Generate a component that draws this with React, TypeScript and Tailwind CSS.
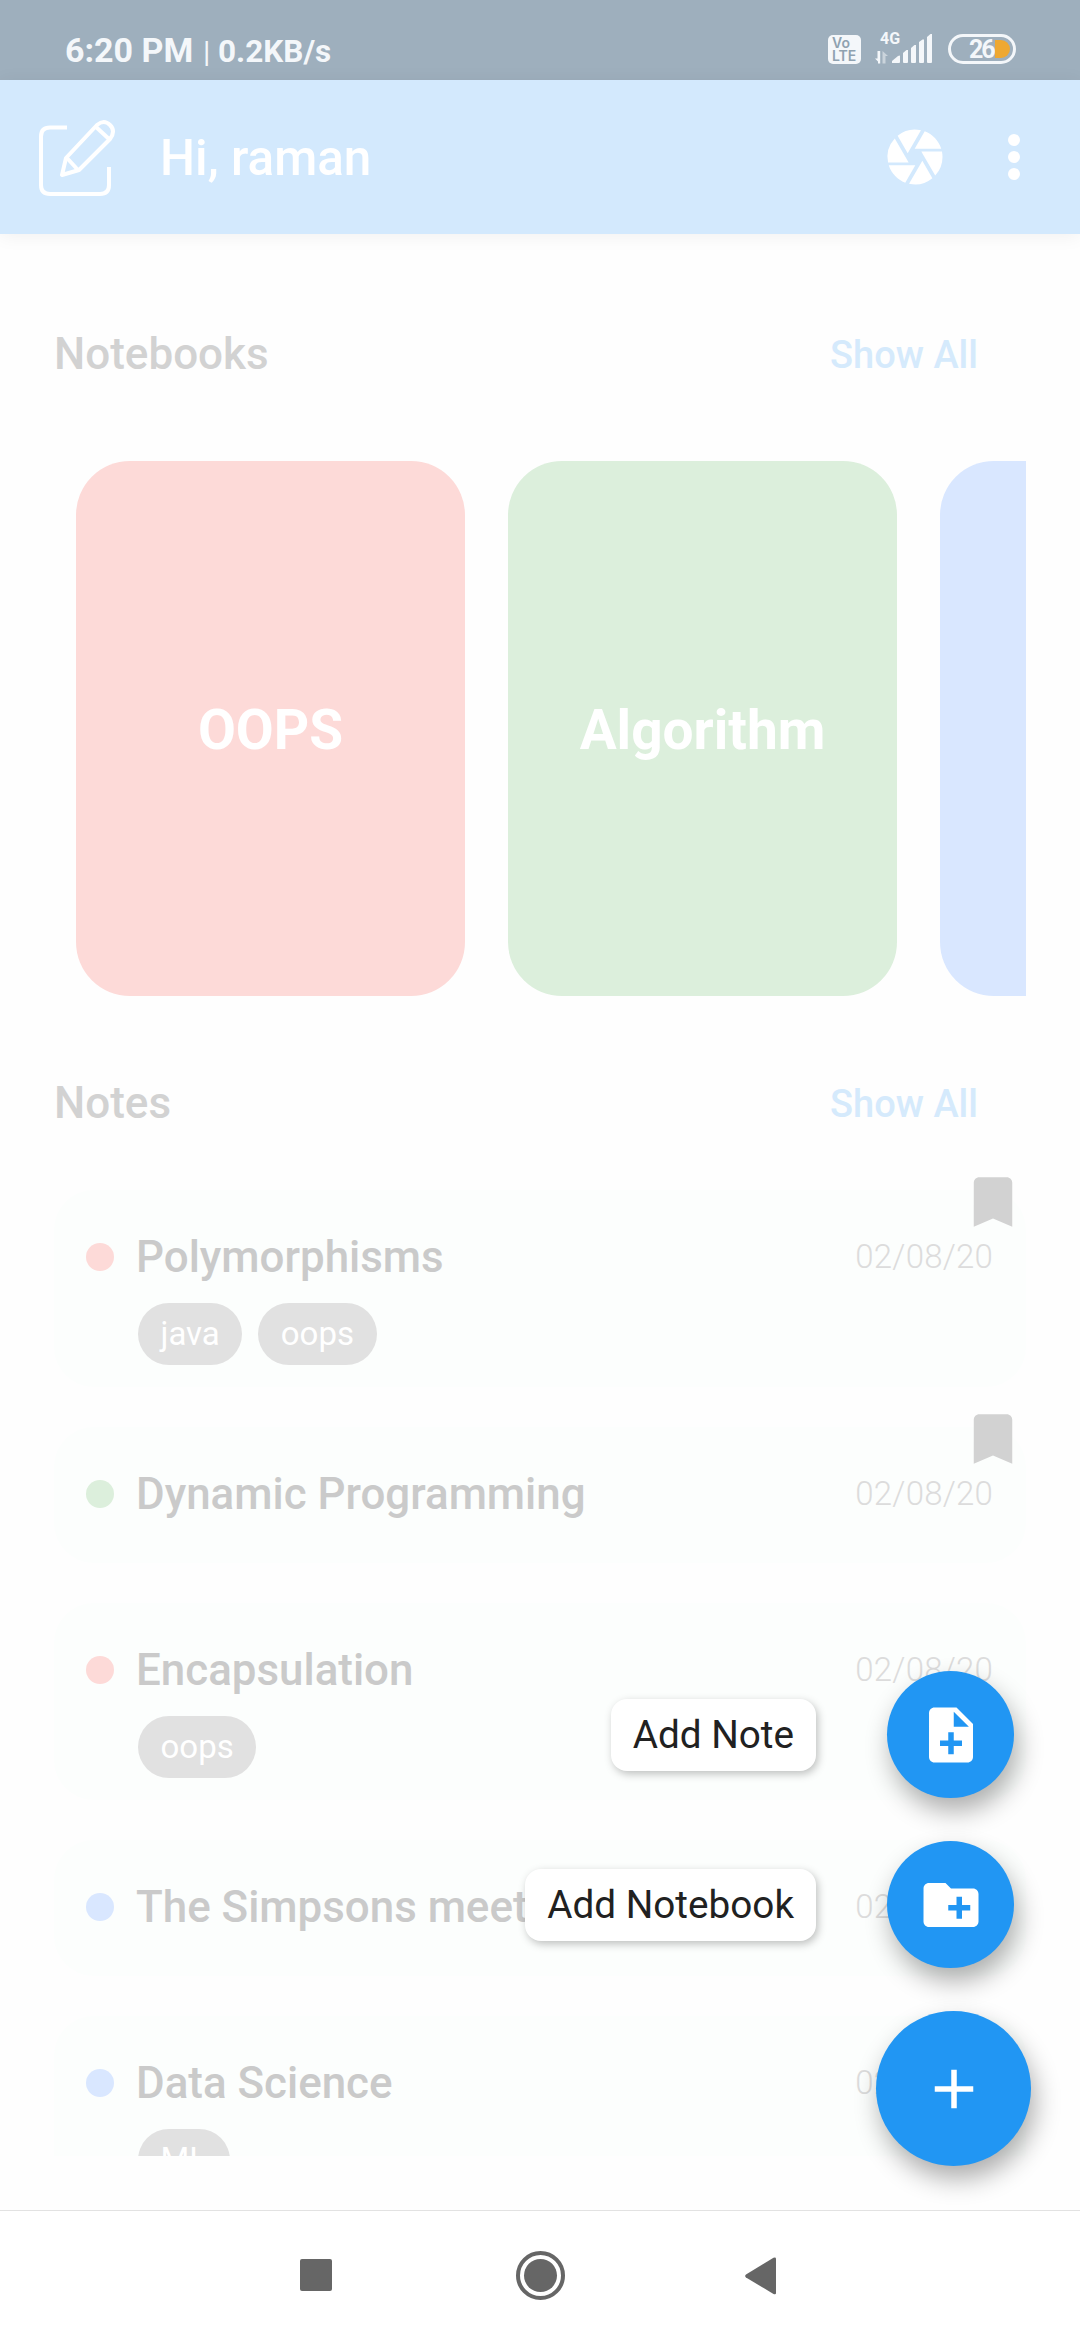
import React from "react";
import { MdAdd, MdBookmark, MdCamera, MdCreateNewFolder, MdNoteAdd } from "react-icons/md";

type Note = { title: string; dot: string; tags: string[]; saved?: boolean };

const notebooks = [
  { name: "OOPS", color: "bg-[#fddad8]" },
  { name: "Algorithm", color: "bg-[#dcefdc]" },
  { name: "", color: "bg-[#d9e7ff]" },
];

const notes: Note[] = [
  { title: "Polymorphisms", dot: "bg-[#fddad8]", tags: ["java", "oops"], saved: true },
  { title: "Dynamic Programming", dot: "bg-[#dcefdc]", tags: [], saved: true },
  { title: "Encapsulation", dot: "bg-[#fddad8]", tags: ["oops"] },
  { title: "The Simpsons meet", dot: "bg-[#d9e7ff]", tags: [] },
  { title: "Data Science", dot: "bg-[#d9e7ff]", tags: ["ML"] },
];

function StatusBar() {
  return (
    <div className="flex h-20 shrink-0 items-start bg-[#9eafbd] pl-[65px] pr-[64px] text-[#f4f7fa]">
      <div className="mt-[30px] flex h-10 items-baseline whitespace-nowrap leading-10">
        <span className="w-[138px] text-[34px] font-bold">6:20 PM</span>
        <span className="w-[15px] text-[30px] font-normal">|</span>
        <span className="text-[31.5px] font-bold">0.2KB/s</span>
      </div>
      <div className="ml-auto flex items-start">
        <div className="mt-[35px] flex h-[29px] w-[33px] flex-col whitespace-nowrap rounded-[5px] bg-[#f4f7fa] pl-[4px] pt-[1px] font-['Inter'] text-[14px] font-semibold leading-[13px] text-[#8fa2b1]">
          <span>Vo</span>
          <span>LTE</span>
        </div>
        <div className="ml-[14px] mt-[30px] w-[14px] whitespace-nowrap">
          <div className="h-[18px] pl-[5px] text-[16px] font-bold leading-[17px]">4G</div>
          <svg className="mt-[3px] block" width="14" height="13" viewBox="0 0 14 13">
            <path d="M5.200 0V12.500H3V10.500L0 7.500H2.500V0Z" fill="#f4f7fa" />
            <path d="M7.500 12.500V0L13 5H10.500V12.500Z" fill="#cad4dc" />
          </svg>
        </div>
        <svg className="ml-[3px] mt-[33px]" width="41" height="31" viewBox="0 0 41 31" fill="#f4f7fa">
          <path d="M0 30V28L6 23Q8 22 8 23V29Q8 30 7 30Z" />
          <path d="M11 29V20L14.500 17H16V29Q16 30 15 30H12Q11 30 11 29Z" />
          <path d="M19 29V15L22.500 12H24V29Q24 30 23 30H20Q19 30 19 29Z" />
          <path d="M27 29V9L30.500 6.500H32V29Q32 30 31 30H28Q27 30 27 29Z" />
          <path d="M35 29V4L38.500 1H40V29Q40 30 39 30H36Q35 30 35 29Z" />
        </svg>
        <div className="ml-[15px] mt-[34px] flex h-[30px] w-[68px] items-center rounded-full border-[3px] border-[#f4f7fa] pl-[18px]">
          <span className="w-[25px] pt-[1px] text-[25px] font-bold leading-6 tracking-[-2px]">26</span>
          <span className="ml-[1px] h-[18px] w-[15px] rounded-l-[2px] rounded-r-full bg-[#eea832]" />
        </div>
      </div>
    </div>
  );
}

function AppBar() {
  return (
    <header className="z-10 flex h-[154px] shrink-0 items-center bg-[#d3e9fd] pl-[38px] text-white shadow-[0_2px_18px_rgba(0,0,0,0.06)]">
      <svg width="80" height="80" viewBox="0 0 80 80" fill="none" stroke="currentColor" strokeWidth="4" strokeLinejoin="round">
        <path d="M29 12.500H12Q3 12.500 3 21.500V70Q3 79 12 79H62Q71 79 71 70V52" transform="translate(0,-2)" />
        <path d="M24 58L28 41L59 8Q66 2 72 8Q78 14 72 22L41 53Z" />
        <path d="M29 41L40 53M58 10L71 22" />
      </svg>
      <h1 className="ml-[42px] flex-1 whitespace-nowrap pt-[2px] text-[49.4px] font-medium leading-[58px]">Hi, raman</h1>
      <MdCamera className="size-[66px]" />
      <div className="ml-[60px] mr-[60px] flex flex-col gap-[5px]">
        <span className="size-[12px] rounded-full bg-white" />
        <span className="size-[12px] rounded-full bg-white" />
        <span className="size-[12px] rounded-full bg-white" />
      </div>
    </header>
  );
}

function SectionHeading({ title }: { title: string }) {
  return (
    <div className="flex h-[60px] items-start justify-between pr-[48px] leading-[60px]">
      <h2 className="text-[44px] font-medium text-[#d2d2d2]">{title}</h2>
      <span className="pt-px text-[38px] font-medium text-[#d5eafc]">Show All</span>
    </div>
  );
}

function NoteCard({ note }: { note: Note }) {
  const tagged = note.tags.length > 0;
  return (
    <article
      className={
        "relative shrink-0 rounded-[40px] bg-[#fcfefd] pl-8 pr-[33px] pt-[36.5px] " + (tagged ? "h-[196.5px]" : "h-[135.5px]")
      }
    >
      {note.saved && <MdBookmark className="absolute -top-[21px] right-0 size-[66px] text-[#d2d2d2]" />}
      <div className="flex h-[60px] items-center">
        <span className={"size-7 rounded-full " + note.dot} />
        <h3 className="ml-[22px] flex-1 whitespace-nowrap text-[43.9px] font-medium leading-[60px] text-[#cacaca]">{note.title}</h3>
        <time className="text-[33px] font-light leading-[60px] tracking-[0.2px] text-[#dcdcdc]">02/08/20</time>
      </div>
      {tagged && (
        <div className="ml-[52px] mt-[16px] flex gap-4">
          {note.tags.map((t) => (
            <span key={t} className="flex h-[62px] items-center rounded-[31px] bg-[#e1e1e1] px-[22.5px] text-[33px] leading-[60px] text-white">
              {t}
            </span>
          ))}
        </div>
      )}
    </article>
  );
}

function ActionLabel({ children }: { children: React.ReactNode }) {
  return (
    <span className="flex h-[72px] items-center whitespace-nowrap rounded-[16px] bg-white px-[22px] text-[38.7px] leading-[60px] text-[#212121] shadow-[2px_3px_9px_rgba(0,0,0,0.25)]">
      {children}
    </span>
  );
}

function SpeedDial() {
  return (
    <div className="absolute right-[49px] top-[1671px] z-20 flex flex-col items-end text-white">
      <div className="mr-[17px] flex items-center gap-[71px]">
        <ActionLabel>Add Note</ActionLabel>
        <button className="flex size-[127px] items-center justify-center rounded-full bg-[#2196f3] shadow-[4px_13px_26px_rgba(0,0,0,0.32)]">
          <MdNoteAdd className="size-[66px]" />
        </button>
      </div>
      <div className="mr-[17px] mt-[43px] flex items-center gap-[71px]">
        <ActionLabel>Add Notebook</ActionLabel>
        <button className="flex size-[127px] items-center justify-center rounded-full bg-[#2196f3] shadow-[4px_13px_26px_rgba(0,0,0,0.32)]">
          <MdCreateNewFolder className="size-[66px]" />
        </button>
      </div>
      <button className="mt-[43px] flex size-[155px] items-center justify-center rounded-full bg-[#2196f3] shadow-[4px_13px_26px_rgba(0,0,0,0.32)]">
        <MdAdd className="size-[66px]" />
      </button>
    </div>
  );
}

function NavBar() {
  return (
    <nav className="flex h-[130px] shrink-0 items-start border-t border-[#e2e2e2] bg-white pl-[300px] pt-[40px] text-[#666]">
      <span className="mt-[8px] size-8 rounded-[2px] bg-[#666]" />
      <span className="ml-[184px] flex size-[49px] items-center justify-center rounded-full border-4 border-[#666]">
        <span className="size-[33px] rounded-full bg-[#666]" />
      </span>
      <svg className="ml-[180px] mt-[6px]" width="31" height="38" viewBox="0 0 31 38" fill="currentColor">
        <path d="M1 17.500L28.500 .8Q31 0 31 2V36Q31 38 28.500 37L1 20.500Q-.7 19 1 17.500Z" />
      </svg>
    </nav>
  );
}

export default function App() {
  return (
    <div className="relative flex h-[2340px] w-[1080px] flex-col overflow-hidden bg-[#fefefe] font-['Roboto',sans-serif]">
      <StatusBar />
      <AppBar />
      <main className="flex min-h-0 flex-1 flex-col px-[54px] pt-[90px]">
        <SectionHeading title="Notebooks" />
        <div className="mt-[77px] flex h-[535px] shrink-0 gap-[43px] overflow-hidden pl-[22px]">
          {notebooks.map((n) => (
            <div key={n.color} className={"flex h-full w-[389px] shrink-0 items-center justify-center rounded-[54px] pt-[4px] text-[55px] font-bold text-white " + n.color}>
              {n.name}
            </div>
          ))}
        </div>
        <div className="mt-[77px]">
          <SectionHeading title="Notes" />
        </div>
        <div className="mb-[54px] mt-[36px] flex min-h-0 flex-1 flex-col gap-[40.5px] overflow-hidden pt-[21px]">
          {notes.map((n) => (
            <NoteCard key={n.title} note={n} />
          ))}
        </div>
      </main>
      <NavBar />
      <SpeedDial />
    </div>
  );
}
